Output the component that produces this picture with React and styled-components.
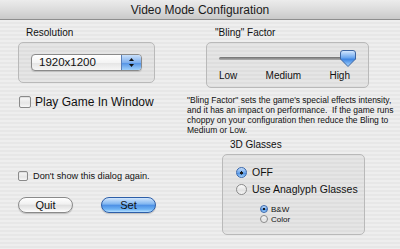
import React from "react";
import styled, { createGlobalStyle } from "styled-components";

const GlobalStyle = createGlobalStyle`
  html, body {
    margin: 0;
    padding: 0;
    width: 400px;
    height: 249px;
    overflow: hidden;
  }
  body {
    font-family: "Liberation Sans", Arial, sans-serif;
    color: #111;
    white-space: nowrap;
  }
`;

const Window = styled.div`
  width: 400px;
  height: 249px;
  display: flex;
  flex-direction: column;
  background: repeating-linear-gradient(
    to bottom,
    #eeeeee 0px,
    #eeeeee 2px,
    #e7e7e7 2px,
    #e7e7e7 4px
  );
`;

const TitleBar = styled.div`
  height: 19px;
  flex: none;
  display: flex;
  align-items: center;
  justify-content: center;
  background: linear-gradient(to bottom, #ececec 0%, #dcdcdc 50%, #c9c9c9 100%);
  border-bottom: 1px solid #8e8e8e;
  font-size: 12px;
  color: #1a1a1a;
`;

const Body = styled.div`
  flex: 1;
  min-height: 0;
  overflow: hidden;
  display: flex;
  padding: 7px 0 0 18px;
`;

const LeftCol = styled.div`
  width: 138px;
  display: flex;
  flex-direction: column;
`;

const RightCol = styled.div`
  width: 183px;
  margin-left: 31px;
  display: flex;
  flex-direction: column;
`;

const GroupLabel = styled.div`
  font-size: 10px;
  height: 12px;
  line-height: 12px;
  padding-left: ${(p) => p.$indent || 8}px;
  margin-top: ${(p) => p.$mt || 0}px;
  margin-bottom: 3px;
`;

const GroupBox = styled.div`
  border: 1px solid #b9b9b9;
  border-radius: 5px;
  background: rgba(0, 0, 0, 0.035);
  box-sizing: border-box;
  height: ${(p) => p.$h}px;
  width: ${(p) => p.$w}px;
  margin-left: ${(p) => p.$ml || 0}px;
  flex: none;
`;

const ResolutionBox = styled(GroupBox)`
  display: flex;
  align-items: center;
  padding-left: 12px;
`;

const Popup = styled.div`
  width: 111px;
  height: 17px;
  box-sizing: border-box;
  border: 1px solid #8a8a8a;
  border-radius: 4px;
  display: flex;
  overflow: hidden;
  background: linear-gradient(to bottom, #ffffff 0%, #f4f4f4 50%, #e4e4e4 51%, #f6f6f6 100%);
  box-shadow: 0 1px 1px rgba(0, 0, 0, 0.15);
`;

const PopupValue = styled.div`
  flex: 1;
  font-size: 11.5px;
  line-height: 15px;
  padding-left: 7px;
`;

const Stepper = styled.div`
  width: 19px;
  border-left: 1px solid #5a7fb8;
  background: linear-gradient(to bottom, #c9e0fb 0%, #7fb0ee 50%, #4f8fe3 51%, #9fd0fb 100%);
  display: flex;
  align-items: center;
  justify-content: center;
`;

const CheckRow = styled.div`
  display: flex;
  align-items: center;
  gap: ${(p) => p.$gap || 4}px;
  font-size: ${(p) => p.$size || 11}px;
  margin-top: ${(p) => p.$mt || 0}px;
  margin-left: ${(p) => p.$ml || 0}px;
`;

const CheckBox = styled.div`
  width: ${(p) => p.$s}px;
  height: ${(p) => p.$s}px;
  box-sizing: border-box;
  border: 1px solid #8a8a8a;
  border-radius: 2px;
  background: linear-gradient(to bottom, #fafafa 0%, #e6e6e6 60%, #f8f8f8 100%);
  box-shadow: inset 0 1px 1px rgba(0, 0, 0, 0.1);
  flex: none;
`;

const Spacer = styled.div`
  flex: 1;
`;

const ButtonRow = styled.div`
  display: flex;
  gap: 28px;
  margin-top: 16px;
  margin-bottom: 36px;
`;

const PillButton = styled.div`
  width: 55px;
  height: 16px;
  box-sizing: border-box;
  border-radius: 8px;
  border: 1px solid ${(p) => (p.$primary ? "#2d5ea8" : "#8a8a8a")};
  background: ${(p) =>
    p.$primary
      ? "linear-gradient(to bottom, #d2e6fc 0%, #7db4f0 45%, #4b8ee4 50%, #6db2f4 80%, #b6e0ff 100%)"
      : "linear-gradient(to bottom, #ffffff 0%, #f0f0f0 45%, #dedede 50%, #efefef 80%, #ffffff 100%)"};
  font-size: 11px;
  line-height: 14px;
  text-align: center;
  box-shadow: 0 1px 1px rgba(0, 0, 0, 0.2);
`;

const SliderBox = styled(GroupBox)`
  display: flex;
  flex-direction: column;
  padding: 6px 12px 0 12px;
`;

const SliderTrack = styled.div`
  position: relative;
  height: 16px;
`;

const TrackLine = styled.div`
  position: absolute;
  left: 0;
  right: 0;
  top: 8px;
  height: 3px;
  border-radius: 2px;
  background: linear-gradient(to bottom, #6f6f6f, #b0b0b0);
`;

const Thumb = styled.svg`
  position: absolute;
  right: 0px;
  top: 1px;
`;

const TickLabels = styled.div`
  display: flex;
  justify-content: space-between;
  font-size: 10px;
  margin-top: 5px;
  padding-right: 6px;
`;

const Note = styled.p`
  margin: 7px 0 0 0;
  font-size: 8.5px;
  line-height: 10px;
`;

const RadioRow = styled.div`
  display: flex;
  align-items: center;
  gap: ${(p) => p.$gap || 5}px;
  font-size: ${(p) => p.$size || 10.5}px;
  margin-top: ${(p) => p.$mt || 0}px;
  margin-left: ${(p) => p.$ml || 0}px;
  height: ${(p) => p.$h || 12}px;
`;

const RadioDot = styled.div`
  width: ${(p) => p.$s}px;
  height: ${(p) => p.$s}px;
  box-sizing: border-box;
  border-radius: 50%;
  border: 1px solid ${(p) => (p.$on ? "#3a68ad" : "#8a8a8a")};
  background: ${(p) =>
    p.$on
      ? "radial-gradient(circle at 50% 55%, #1a1a1a 0 22%, transparent 25%), linear-gradient(to bottom, #c6defa 0%, #6fa6ea 50%, #4a8de2 55%, #a6d4fb 100%)"
      : "linear-gradient(to bottom, #fbfbfb 0%, #e2e2e2 60%, #f6f6f6 100%)"};
  flex: none;
`;

const GlassesBox = styled(GroupBox)`
  display: flex;
  flex-direction: column;
  padding: 11px 0 0 13px;
`;

const App = () => {
  return (
    <Window>
      <GlobalStyle />
      <TitleBar>Video Mode Configuration</TitleBar>
      <Body>
        <LeftCol>
          <GroupLabel>Resolution</GroupLabel>
          <ResolutionBox $w={137} $h={41}>
            <Popup>
              <PopupValue>1920x1200</PopupValue>
              <Stepper>
                <svg width="7" height="11" viewBox="0 0 7 11">
                  <path d="M3.5 1 L6 4 L1 4 Z" fill="#111" />
                  <path d="M3.5 10 L6 7 L1 7 Z" fill="#111" />
                </svg>
              </Stepper>
            </Popup>
          </ResolutionBox>
          <CheckRow $mt={12} $ml={1} $size={12}>
            <CheckBox $s={12} />
            Play Game In Window
          </CheckRow>
          <Spacer />
          <CheckRow $ml={0} $size={9.2} $gap={5}>
            <CheckBox $s={10} />
            Don't show this dialog again.
          </CheckRow>
          <ButtonRow>
            <PillButton>Quit</PillButton>
            <PillButton $primary>Set</PillButton>
          </ButtonRow>
        </LeftCol>
        <RightCol>
          <GroupLabel $indent={28}>"Bling" Factor</GroupLabel>
          <SliderBox $w={163} $h={46} $ml={19}>
            <SliderTrack>
              <TrackLine />
              <Thumb width="16" height="17" viewBox="0 0 16 17">
                <defs>
                  <linearGradient id="thumbg" x1="0" y1="0" x2="0" y2="1">
                    <stop offset="0" stopColor="#d9ebff" />
                    <stop offset="0.45" stopColor="#6ba6ee" />
                    <stop offset="0.55" stopColor="#3f86e2" />
                    <stop offset="1" stopColor="#a8d6ff" />
                  </linearGradient>
                </defs>
                <path
                  d="M3 0.5 H13 Q15.5 0.5 15.5 3 V9 L8 16.5 L0.5 9 V3 Q0.5 0.5 3 0.5 Z"
                  fill="url(#thumbg)"
                  stroke="#3c64a0"
                  strokeWidth="1"
                />
              </Thumb>
            </SliderTrack>
            <TickLabels>
              <span>Low</span>
              <span>Medium</span>
              <span>High</span>
            </TickLabels>
          </SliderBox>
          <Note>
            "Bling Factor" sets the game's special effects intensity,
            <br />
            and it has an impact on performance.&nbsp; If the game runs
            <br />
            choppy on your configuration then reduce the Bling to
            <br />
            Medium or Low.
          </Note>
          <GroupLabel $indent={43} $mt={4}>
            3D Glasses
          </GroupLabel>
          <GlassesBox $w={143} $h={81} $ml={35}>
            <RadioRow>
              <RadioDot $s={11} $on />
              OFF
            </RadioRow>
            <RadioRow $mt={5}>
              <RadioDot $s={11} />
              Use Anaglyph Glasses
            </RadioRow>
            <RadioRow $mt={9} $ml={24} $size={8} $gap={3} $h={10}>
              <RadioDot $s={8} $on />
              B&amp;W
            </RadioRow>
            <RadioRow $ml={24} $size={8} $gap={3} $h={10}>
              <RadioDot $s={8} />
              Color
            </RadioRow>
          </GlassesBox>
        </RightCol>
      </Body>
    </Window>
  );
};

export default App;
